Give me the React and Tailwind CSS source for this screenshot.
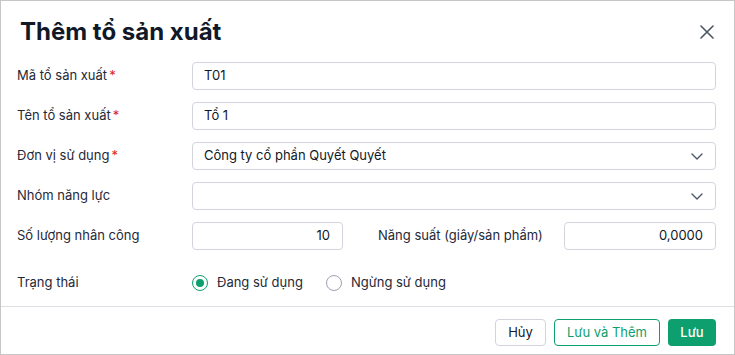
import { useState } from 'react';

const font = { fontFamily: 'Inter, "Noto Sans", sans-serif' };

function Label({ text, required }) {
  return (
    <div className="w-[175px] shrink-0 text-[13px] text-[#1f2937]">
      {text}
      {required && <span className="ml-[2px] text-[#e02424]">*</span>}
    </div>
  );
}

function Chevron() {
  return (
    <svg width="12" height="7" viewBox="0 0 12 7" fill="none" className="text-[#4b5563]">
      <path d="M1 1l5 5 5-5" stroke="currentColor" strokeWidth="1.4" strokeLinecap="round" strokeLinejoin="round" />
    </svg>
  );
}

function Radio({ checked, label, onClick }) {
  return (
    <button type="button" onClick={onClick} className="flex items-center gap-[9px] text-[13px] text-[#1f2937]">
      <span
        className={`flex h-[16px] w-[16px] items-center justify-center rounded-full border ${
          checked ? 'border-[#0e9f6e] border-[1.5px]' : 'border-[#9ca3af]'
        }`}
      >
        {checked && <span className="h-[8px] w-[8px] rounded-full bg-[#0e9f6e]" />}
      </span>
      {label}
    </button>
  );
}

export default function App() {
  const [status, setStatus] = useState('active');

  return (
    <div style={font} className="flex h-[355px] w-[735px] flex-col border border-[#c6c6c6] bg-white">
      {/* header */}
      <div className="flex items-center justify-between pl-[19px] pr-[20px] pt-[15px]">
        <h1 className="text-[24px] font-bold leading-[32px] text-[#111827]">Thêm tổ sản xuất</h1>
        <button type="button" className="text-[#4b5563]">
          <svg width="14" height="14" viewBox="0 0 14 14" fill="none">
            <path d="M1 1l12 12M13 1L1 13" stroke="currentColor" strokeWidth="1.6" strokeLinecap="round" />
          </svg>
        </button>
      </div>

      {/* form */}
      <div className="flex flex-col gap-[12px] pl-[16px] pr-[18px] pt-[14px]">
        <div className="flex items-center">
          <Label text="Mã tổ sản xuất" required />
          <div className="flex h-[28px] flex-1 items-center rounded-[4px] border border-[#d1d5db] px-[11px] text-[13px] text-[#111827]">
            T01
          </div>
        </div>
        <div className="flex items-center">
          <Label text="Tên tổ sản xuất" required />
          <div className="flex h-[28px] flex-1 items-center rounded-[4px] border border-[#d1d5db] px-[11px] text-[13px] text-[#111827]">
            Tổ 1
          </div>
        </div>
        <div className="flex items-center">
          <Label text="Đơn vị sử dụng" required />
          <div className="flex h-[28px] flex-1 items-center justify-between rounded-[4px] border border-[#d1d5db] pl-[11px] pr-[12px] text-[13px] text-[#111827]">
            <span>Công ty cổ phần Quyết Quyết</span>
            <Chevron />
          </div>
        </div>
        <div className="flex items-center">
          <Label text="Nhóm năng lực" />
          <div className="flex h-[28px] flex-1 items-center justify-end rounded-[4px] border border-[#d1d5db] pl-[11px] pr-[12px]">
            <Chevron />
          </div>
        </div>
        <div className="flex items-center">
          <Label text="Số lượng nhân công" />
          <div className="flex h-[28px] w-[151px] items-center justify-end rounded-[4px] border border-[#d1d5db] px-[12px] text-[13px] text-[#111827]">
            10
          </div>
          <div className="ml-[35px] flex-1 text-[13px] text-[#1f2937]">Năng suất (giây/sản phẩm)</div>
          <div className="flex h-[28px] w-[152px] items-center justify-end rounded-[4px] border border-[#d1d5db] px-[12px] text-[13px] text-[#111827]">
            0,0000
          </div>
        </div>
        <div className="mt-[11px] flex items-center">
          <Label text="Trạng thái" />
          <div className="flex items-center gap-[23px]">
            <Radio checked={status === 'active'} label="Đang sử dụng" onClick={() => setStatus('active')} />
            <Radio checked={status === 'inactive'} label="Ngừng sử dụng" onClick={() => setStatus('inactive')} />
          </div>
        </div>
      </div>

      {/* footer */}
      <div className="mt-auto flex justify-end gap-[8px] border-t border-[#dcdfe3] pb-[8px] pr-[18px] pt-[12px]">
        <button type="button" className="h-[27px] w-[51px] rounded-[4px] border border-[#d1d5db] text-[13px] text-[#111827]">
          Hủy
        </button>
        <button type="button" className="h-[27px] w-[106px] rounded-[4px] border border-[#0e9f6e] text-[13px] text-[#0e9f6e]">
          Lưu và Thêm
        </button>
        <button type="button" className="h-[27px] w-[48px] rounded-[4px] bg-[#0e9f6e] text-[13px] font-medium text-white">
          Lưu
        </button>
      </div>
    </div>
  );
}
